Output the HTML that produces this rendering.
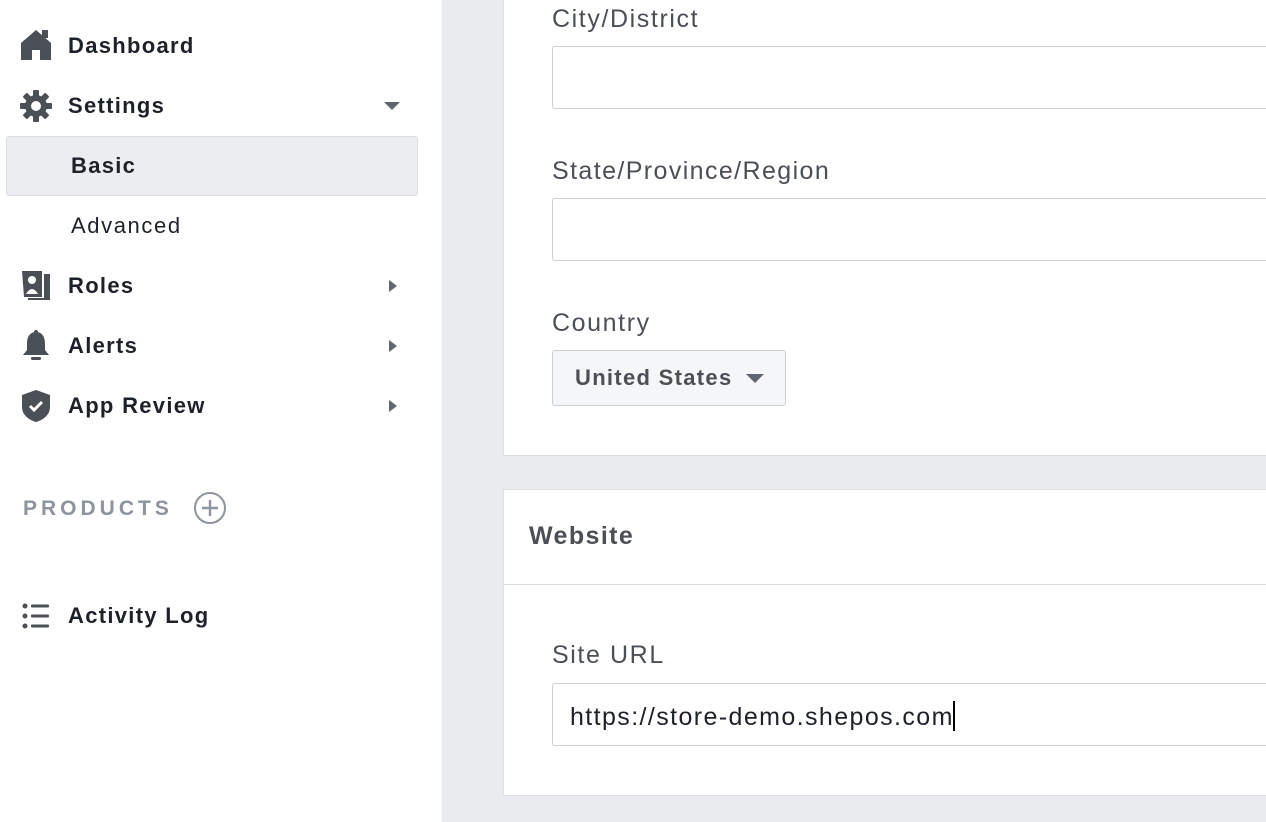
<!DOCTYPE html>
<html><head><meta charset="utf-8"><style>
*{box-sizing:border-box;margin:0;padding:0}
body{width:1266px;height:822px;overflow:hidden;position:relative;background:#fff;font-family:"Liberation Sans",Arial,sans-serif}
.a{position:absolute}
.nav{font-weight:bold;font-size:22px;color:#1d2129;left:68px;letter-spacing:1.3px}
.main{left:442px;top:0;width:824px;height:822px;background:#e9ebee}
.card{background:#fff;border:1px solid #dddfe2;border-right:none}
.lbl{font-size:25px;color:#4b4f56;left:552px;letter-spacing:1.6px}
.inp{left:552px;width:720px;height:63px;border:1px solid #ccd0d5;border-radius:3px;background:#fff}
.tri{width:0;height:0;border-top:6px solid transparent;border-bottom:6px solid transparent;border-left:8px solid #606770}
</style></head><body>
<svg class="a" style="left:20px;top:29px" width="32" height="32" viewBox="0 0 32 32"><path d="M16 1 L1 14 V31 H12 V21 H20 V31 H31 V14 Z" fill="#4b4f56"/><rect x="22" y="1" width="6" height="8" fill="#4b4f56"/></svg>
<div class="a nav" style="top:33px">Dashboard</div>
<svg class="a" style="left:20px;top:90px" width="32" height="32" viewBox="0 0 32 32"><g fill="#4b4f56"><circle cx="16" cy="16" r="11"/><rect x="13" y="0" width="6" height="32" rx="1"/><rect x="0" y="13" width="32" height="6" rx="1"/><rect x="13" y="0" width="6" height="32" rx="1" transform="rotate(45 16 16)"/><rect x="13" y="0" width="6" height="32" rx="1" transform="rotate(-45 16 16)"/></g><circle cx="16" cy="16" r="5" fill="#fff"/></svg>
<div class="a nav" style="top:93px">Settings</div>
<div class="a" style="left:384px;top:102px;border-left:8px solid transparent;border-right:8px solid transparent;border-top:8px solid #606770"></div>
<div class="a" style="left:6px;top:136px;width:412px;height:60px;background:#ebedf0;border:1px solid #dadde1;border-radius:3px"></div>
<div class="a nav" style="left:71px;top:153px">Basic</div>
<div class="a" style="left:71px;top:213px;font-size:22px;color:#1d2129;letter-spacing:1.6px">Advanced</div>
<svg class="a" style="left:20px;top:270px" width="32" height="32" viewBox="0 0 32 32"><path d="M2 1 H22 V27 H4 Z" fill="#4b4f56"/><path d="M24 4 H30 V30 H8 V28 H24 Z" fill="#4b4f56"/><circle cx="12" cy="10" r="4" fill="#fff"/><path d="M6 24 Q12 14 18 24 Z" fill="#fff"/></svg>
<div class="a nav" style="top:273px">Roles</div>
<div class="a tri" style="left:389px;top:280px"></div>
<svg class="a" style="left:21px;top:330px" width="30" height="32" viewBox="0 0 30 32"><path d="M15 2 C8 2 6 8 6 14 V20 L2 25 H28 L24 20 V14 C24 8 22 2 15 2Z" fill="#4b4f56"/><rect x="10" y="27" width="10" height="3" rx="1.5" fill="#4b4f56"/><circle cx="15" cy="2" r="2" fill="#4b4f56"/></svg>
<div class="a nav" style="top:333px">Alerts</div>
<div class="a tri" style="left:389px;top:340px"></div>
<svg class="a" style="left:21px;top:389px" width="30" height="34" viewBox="0 0 30 34"><path d="M15 1 L29 6 V18 C29 26 22 31 15 33 C8 31 1 26 1 18 V6 Z" fill="#4b4f56"/><path d="M9 17 L13 21 L21 13" stroke="#fff" stroke-width="3" fill="none"/></svg>
<div class="a nav" style="top:393px">App Review</div>
<div class="a tri" style="left:389px;top:400px"></div>
<div class="a" style="left:23px;top:497px;font-size:21px;letter-spacing:4px;color:#8d949e;font-weight:bold">PRODUCTS</div>
<svg class="a" style="left:193px;top:491px" width="34" height="34" viewBox="0 0 34 34"><circle cx="17" cy="17" r="15" stroke="#8d949e" stroke-width="2" fill="none"/><path d="M17 9 V25 M9 17 H25" stroke="#8d949e" stroke-width="2.4"/></svg>
<svg class="a" style="left:22px;top:603px" width="28" height="26" viewBox="0 0 28 26"><g fill="#4b4f56"><circle cx="3" cy="3" r="2.5"/><circle cx="3" cy="13" r="2.5"/><circle cx="3" cy="23" r="2.5"/><rect x="9" y="1.5" width="18" height="3" rx="1"/><rect x="9" y="11.5" width="18" height="3" rx="1"/><rect x="9" y="21.5" width="18" height="3" rx="1"/></g></svg>
<div class="a nav" style="top:603px">Activity Log</div>
<div class="a main"></div>
<div class="a card" style="left:503px;top:-5px;width:770px;height:461px"></div>
<div class="a lbl" style="top:5px">City/District</div>
<div class="a inp" style="top:46px"></div>
<div class="a lbl" style="top:157px;letter-spacing:1.4px">State/Province/Region</div>
<div class="a inp" style="top:198px"></div>
<div class="a lbl" style="top:309px">Country</div>
<div class="a" style="left:552px;top:350px;width:234px;height:56px;background:#f5f6f7;border:1px solid #ccd0d5;border-radius:3px"></div>
<div class="a" style="left:575px;top:365px;font-size:22px;font-weight:bold;color:#4b4f56;letter-spacing:1.3px">United States</div>
<div class="a" style="left:746px;top:374px;border-left:9px solid transparent;border-right:9px solid transparent;border-top:9px solid #606770"></div>
<div class="a card" style="left:503px;top:489px;width:770px;height:307px"></div>
<div class="a" style="left:504px;top:584px;width:770px;height:1px;background:#dddfe2"></div>
<div class="a" style="left:529px;top:522px;font-size:25px;font-weight:bold;color:#4b4f56;letter-spacing:1.4px">Website</div>
<div class="a lbl" style="top:641px">Site URL</div>
<div class="a inp" style="top:683px"></div>
<div class="a" style="left:570px;top:701px;font-size:25px;color:#1d2129;letter-spacing:1.4px">https://store-demo.shepos.com<span style="display:inline-block;width:2px;height:30px;background:#000;vertical-align:-6px;margin-left:-1px"></span></div>
</body></html>
